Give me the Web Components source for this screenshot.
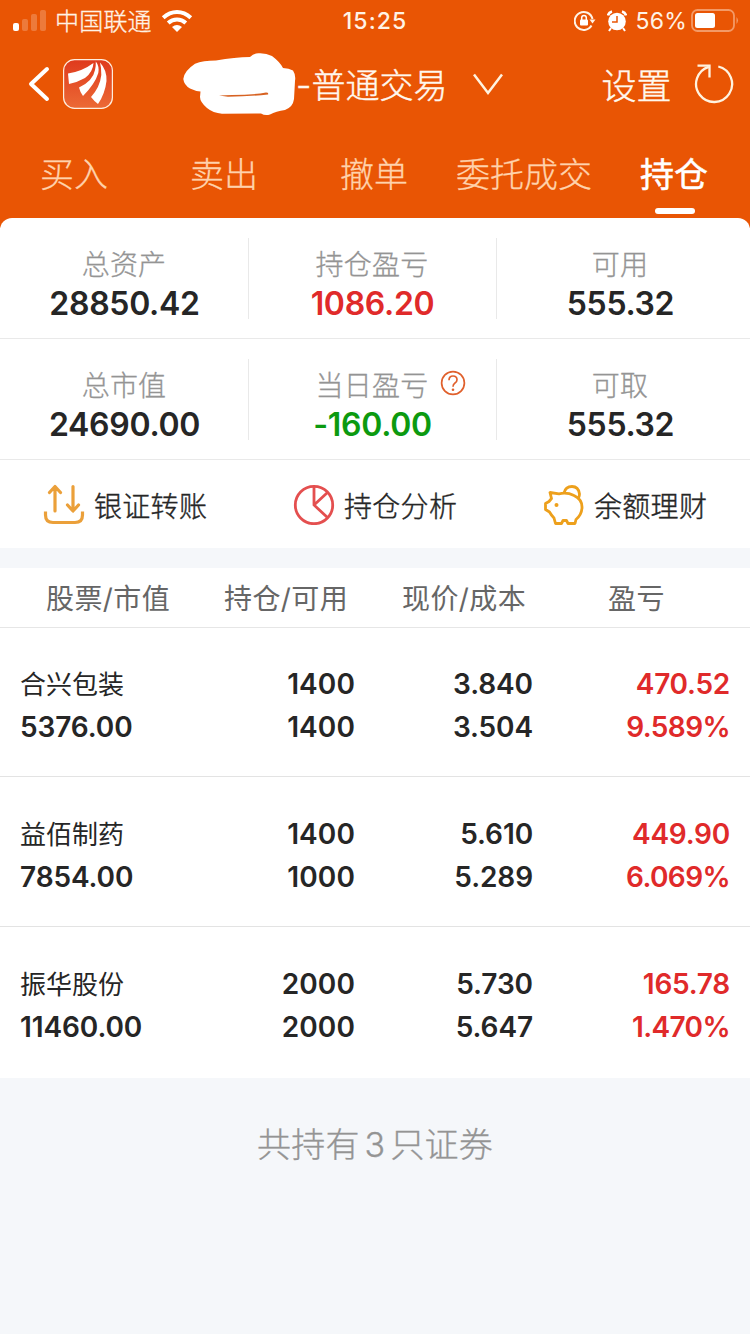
<!DOCTYPE html>
<html lang="zh-CN">
<head>
<meta charset="utf-8">
<title>持仓</title>
<style>
body{margin:0;width:750px;height:1334px;overflow:hidden;background:#f5f7fa;font-family:Inter,"Noto Sans CJK SC",sans-serif;color:#262626;font-kerning:normal}
</style>
</head>
<body>
<trade-app></trade-app>
<script>
const define = (name, html) => {
  const t = document.createElement('template');
  t.innerHTML = html;
  customElements.define(name, class extends HTMLElement {
    constructor() {
      super();
      this.attachShadow({mode: 'open'}).append(t.content.cloneNode(true));
    }
  });
};

define('status-bar', `
<style>
:host{display:grid;grid-template-columns:1fr auto 1fr;height:40px;align-items:center;color:#fff3e6;font-size:22px;line-height:40px}
.l,.r{display:flex;align-items:center;height:40px}
.l{padding-left:12px}
.l span{font-size:24px;margin:2px 0 0 9px;font-weight:300;-webkit-text-stroke:.3px;letter-spacing:.2px}
.l .wifi{margin-left:9px}
.t{font-weight:500;letter-spacing:1.1px;font-size:23px;padding-top:1px}
.r{justify-content:flex-end;padding-right:11px}
.r span{margin:1px 4px 0 9px;letter-spacing:.2px;font-size:23px}
svg{display:block}
</style>
<div class="l">
<svg width="34" height="24" viewBox="0 0 34 24"><g fill="#fff"><rect x="1" y="14" width="6" height="8" rx="2"/><g opacity=".22"><rect x="10" y="10" width="6" height="12" rx="2"/><rect x="19" y="5" width="6" height="17" rx="2"/><rect x="28" y="1" width="6" height="21" rx="2"/></g></g></svg>
<span>中国联通</span>
<svg class="wifi" width="32" height="24" viewBox="0 0 32 24"><g fill="none" stroke="#fff" stroke-width="4"><path d="M2.200 8.800Q8.500 3 16 3T29.800 8.800"/><path d="M7.200 14Q11 10.500 16 10.500T24.800 14"/></g><path d="M11 18Q16 14 21 18L16 23Z" fill="#fff"/></svg>
</div>
<div class="t">15:25</div>
<div class="r">
<svg width="22" height="22" viewBox="0 0 22 22"><path d="M17.500 15.500A9 9 0 1 1 18.500 9" fill="none" stroke="#fff3e6" stroke-width="2"/><path d="M15.500 9.500h6l-3 4z" fill="#fff3e6"/><rect x="6" y="9.500" width="8" height="6" rx="1" fill="#fff"/><path d="M7.700 10V7.700a2.300 2.300 0 0 1 4.600 0V10" fill="none" stroke="#fff" stroke-width="1.500"/></svg>
<svg style="margin-left:11px" width="20" height="22" viewBox="0 0 20 22"><circle cx="10" cy="11.500" r="8.800" fill="#fff"/><path d="M1 5.500Q1.500 2.500 5 1.500M15 1.500Q18.500 2.500 19 5.500" fill="none" stroke="#fff" stroke-width="2.600"/><path d="M4 18l-2 3M16 18l2 3" stroke="#fff" stroke-width="2"/><path d="M10 6v6H5" fill="none" stroke="#e95504" stroke-width="1.500"/></svg>
<span>56%</span>
<svg width="48" height="24" viewBox="0 0 48 24"><rect x="1" y="1" width="42" height="21" rx="5.500" fill="none" stroke="#f39a67" stroke-width="1.800"/><rect x="4" y="4" width="20" height="15" rx="2.500" fill="#fff"/><path d="M45.500 8q3 3.500 0 7z" fill="#f39a67"/></svg>
</div>`);

define('nav-bar', `
<style>
:host{display:flex;position:relative;height:88px;align-items:center;color:#fff8ee;font-size:34px;line-height:88px;font-weight:300;-webkit-text-stroke:.4px}
svg{display:block;flex:none}
.back{margin-left:27px}
.logo{margin-left:12px}
.mask{margin-left:70px}
.title{margin-left:0;padding-top:4px;white-space:nowrap}
.down{margin-left:25px}
.set{margin-left:97px;padding-top:4px;font-size:35px}
.re{margin-left:23px}
</style>
<svg class="back" width="24" height="40" viewBox="0 0 24 40"><path d="M20 5L4 20L20 35" fill="none" stroke="#fff" stroke-width="4" stroke-linecap="round" stroke-linejoin="round"/></svg>
<svg class="logo" width="50" height="50" viewBox="63 59 50 50"><defs><linearGradient id="g" x1="0" y1="0" x2="0" y2="1"><stop offset="0" stop-color="#df3a1d"/><stop offset="1" stop-color="#ec6a35"/></linearGradient></defs><rect x="63.600" y="59.600" width="48.800" height="48.800" rx="11" fill="url(#g)" stroke="#ffeedd" stroke-width="1.200"/><g fill="#fff"><path d="M68 73.500Q82 71.500 93.500 63Q93 72 85 78Q78 82 69 84Z"/><path d="M95.800 61.500Q99.500 66 98.300 73Q95 84 83 96Q80 92 79 87.500Q93 81 95 70Q96 66 95.800 61.500Z"/><path d="M100 62.500Q107 70 106.500 81Q105 94 98 104Q94 101 91 97Q100 87 101.300 75Q101.500 68 100 62.500Z"/></g></svg>
<svg class="mask" width="113" height="64" viewBox="183 51 113 64"><path d="M183.300 78Q184 70 195 62.700Q203 59.500 216 59.500Q235 56 250 56Q254 52 259 52.300Q266 52 272 55Q280 61 283 67Q289 67 293 69.500Q296 74 295 80L294 98Q293 106 285 109Q276 110 270 113.500Q265 115 261 112.500L222 112.700Q213 112 207 107Q200 101 200 96L200.500 90.500Q195 90 190 87.500Q184 84 183.300 78Z" fill="#fff"/><path d="M219 94.500Q225 94 232 94Q252 94 266 91.500Q269 91.500 268 93.500Q250 95.500 228 95.800Z" fill="#d76222"/></svg>
<span class="title">-普通交易</span>
<svg class="down" width="32" height="24" viewBox="0 0 32 24"><path d="M2 2.500L16 21L30 2.500" fill="none" stroke="#fff3e0" stroke-width="2.500"/></svg>
<span class="set">设置</span>
<svg class="re" width="42" height="42" viewBox="0 0 42 42"><g fill="none" stroke="#fff3e0" stroke-width="2.300"><path d="M24.300 3.500A18 18 0 1 1 14.800 3.800"/><path d="M3.500 2.700H15.500V14.500"/></g></svg>`);

define('tab-item', `
<style>
:host{display:flex;flex:0 0 150px;flex-direction:column;align-items:center;color:#ffd2ac;font-size:34px;font-weight:300;-webkit-text-stroke:.3px;line-height:50px;white-space:nowrap}
i{display:none;width:40px;height:6px;border-radius:3px;background:#fff;margin:8px 0 0 2px}
:host([active]){color:#fff;font-weight:400;-webkit-text-stroke:.5px}
:host([active]) i{display:block}
</style><slot></slot><i></i>`);

define('tab-bar', `
<style>:host{display:flex;box-sizing:border-box;height:90px;padding-top:22px}div{display:flex;margin-left:-1px}</style>
<div><slot></slot></div>`);

define('stat-cell', `
<style>
:host{display:flex;flex-direction:column;align-items:center;box-sizing:border-box;height:81px;margin-top:20px;border-left:1px solid #e9e9e9}
:host([first]){border-color:transparent}
.k{display:flex;align-items:center;font-size:28px;line-height:44px;height:44px;color:#949494;font-weight:300;-webkit-text-stroke:.3px;letter-spacing:.2px;margin:5px 1px 0 0;position:relative}
.v{font-size:32px;line-height:36px;margin-top:-1px;font-weight:600;color:var(--c,#262626);letter-spacing:-.3px}
</style>
<div class="k"><slot name="label"></slot></div><div class="v"><slot></slot></div>`);

define('stat-row', `
<style>:host{display:grid;grid-template-columns:248px 248px 248px;box-sizing:border-box;height:121px;border-bottom:1px solid #e9e9e9}</style><slot></slot>`);

define('help-mark', `
<style>:host{position:absolute;left:124px;top:6px}svg{display:block}</style>
<svg width="26" height="26" viewBox="0 0 26 26"><g fill="none" stroke="#e0602c" stroke-width="1.700"><circle cx="13" cy="13" r="11.400"/><path d="M9 10.200Q9 6 13 6T17 9.800Q17 11.800 15 13Q13 14.300 13 16.800"/></g><circle cx="13" cy="19.800" r="1.300" fill="#e0602c"/></svg>`);

define('quick-action', `
<style>:host{display:flex;align-items:center;flex:0 0 250px;box-sizing:border-box;padding-left:43px;font-size:28px;font-weight:300;letter-spacing:.3px}
span{margin:5px 0 0 9px;line-height:40px;-webkit-text-stroke:.4px}slot{display:block}</style>
<slot name="icon"></slot><span><slot></slot></span>`);

define('quick-actions', `
<style>:host{display:flex;height:88px;align-items:center}</style><slot></slot>`);

define('table-head', `
<style>:host{display:flex;box-sizing:border-box;height:60px;margin-top:20px;background:#fff;border-bottom:1px solid #e6e6e6;color:#666;font-size:28px;font-weight:400;line-height:63px;letter-spacing:.4px}
span{white-space:nowrap}
.a{padding-left:46px;width:178px}.b{width:178px}.c{width:206px}</style>
<span class="a">股票/市值</span><span class="b">持仓/可用</span><span class="c">现价/成本</span><span>盈亏</span>`);

define('holding-row', `
<style>
:host{display:grid;grid-template-columns:201px 134px 178px 197px;box-sizing:border-box;height:150px;padding:36px 20px 0;background:#fff;border-bottom:1px solid #e3e3e3;font-size:28px;font-weight:600;line-height:43px;grid-auto-rows:43px;text-align:right;letter-spacing:-.1px}
:host(:first-of-type){height:149px;padding-top:35px}
:host(:last-of-type){height:151px;border-color:transparent}
::slotted([slot=name]){font-size:26px;font-weight:400;letter-spacing:0}
::slotted([slot=qty]),::slotted([slot=free]){letter-spacing:.1px}
::slotted([slot=gain]){letter-spacing:-.25px}
::slotted([slot=rate]){letter-spacing:-.6px}
.l{text-align:left}.u{color:#e02a2a}
</style>
<div class="l"><slot name="name"></slot></div><div><slot name="qty"></slot></div><div><slot name="price"></slot></div><div class="u"><slot name="gain"></slot></div>
<div class="l"><slot name="value"></slot></div><div><slot name="free"></slot></div><div><slot name="cost"></slot></div><div class="u"><slot name="rate"></slot></div>`);

const holding = (name, value, qty, free, price, cost, gain, rate) =>
  '<holding-row>' + Object.entries({name, value, qty, free, price, cost, gain, rate})
    .map(([k, v]) => `<span slot="${k}">${v}</span>`).join('') + '</holding-row>';

define('trade-app', `
<style>
:host{display:block}
header{background:#e95504;height:228px}
.card{background:#fff;border-radius:12px 12px 0 0;margin-top:-10px;height:330px}
footer{text-align:center;color:#949494;font-size:34px;font-weight:300;-webkit-text-stroke:.3px;line-height:50px;padding-top:42px;letter-spacing:.2px}
footer b{font-weight:300;margin:0 5px}
svg{display:block}
</style>
<header><status-bar></status-bar><nav-bar></nav-bar>
<tab-bar><tab-item>买入</tab-item><tab-item>卖出</tab-item><tab-item>撤单</tab-item><tab-item>委托成交</tab-item><tab-item active>持仓</tab-item></tab-bar></header>
<div class="card">
<stat-row>
<stat-cell first><span slot="label">总资产</span>28850.42</stat-cell>
<stat-cell style="--c:#e02a2a"><span slot="label">持仓盈亏</span>1086.20</stat-cell>
<stat-cell><span slot="label">可用</span>555.32</stat-cell>
</stat-row>
<stat-row>
<stat-cell first><span slot="label">总市值</span>24690.00</stat-cell>
<stat-cell style="--c:#0c9a10"><span slot="label">当日盈亏</span><help-mark slot="label"></help-mark>-160.00</stat-cell>
<stat-cell><span slot="label">可取</span>555.32</stat-cell>
</stat-row>
<quick-actions>
<quick-action><svg slot="icon" width="42" height="42" viewBox="0 0 42 42"><g fill="none" stroke="#eba03a" stroke-width="3.200" stroke-linecap="round" stroke-linejoin="round"><path d="M12 28V4M6.500 9.500L12 3.500L17.500 9.500M30 3.500V27.500M24.500 22L30 28L35.500 22"/><path d="M2.500 28.500V32Q2.500 39.500 10 39.500H32Q39.500 39.500 39.500 32V28.500" stroke-linecap="butt"/></g></svg>银证转账</quick-action>
<quick-action><svg slot="icon" width="42" height="42" viewBox="0 0 42 42"><g fill="none" stroke="#e44f4f" stroke-width="2.800"><circle cx="21" cy="22" r="18.700"/><path d="M21 3.500V22L34.500 34.500M21 22L34.500 9.500"/></g></svg>持仓分析</quick-action>
<quick-action><svg slot="icon" width="42" height="42" viewBox="0 0 42 42"><g fill="none" stroke="#eda01c" stroke-width="2.800" stroke-linejoin="round" transform="translate(0 1)"><path d="M7 8.500L16 9.800Q24 8 31 11.500Q39.500 15.500 39 24Q38.500 31 33 35.500L32 39.500H25L23.500 36.500H20L18.500 39.500H12.500L11 34Q8.500 31.500 6.500 28L2.500 25.500V19.500L6 17.500L8.500 14.500Z"/><path d="M21 9Q22.500 2.500 29 2.500T36.500 10Q36.500 12 35.500 14"/></g><circle cx="13.500" cy="22" r="2" fill="#eda01c"/></svg>余额理财</quick-action>
</quick-actions>
</div>
<table-head></table-head>
<section>
${holding('合兴包装', '5376.00', '1400', '1400', '3.840', '3.504', '470.52', '9.589%')}
${holding('益佰制药', '7854.00', '1400', '1000', '5.610', '5.289', '449.90', '6.069%')}
${holding('振华股份', '11460.00', '2000', '2000', '5.730', '5.647', '165.78', '1.470%')}
</section>
<footer>共持有<b>3</b>只证券</footer>`);
</script>
</body>
</html>
